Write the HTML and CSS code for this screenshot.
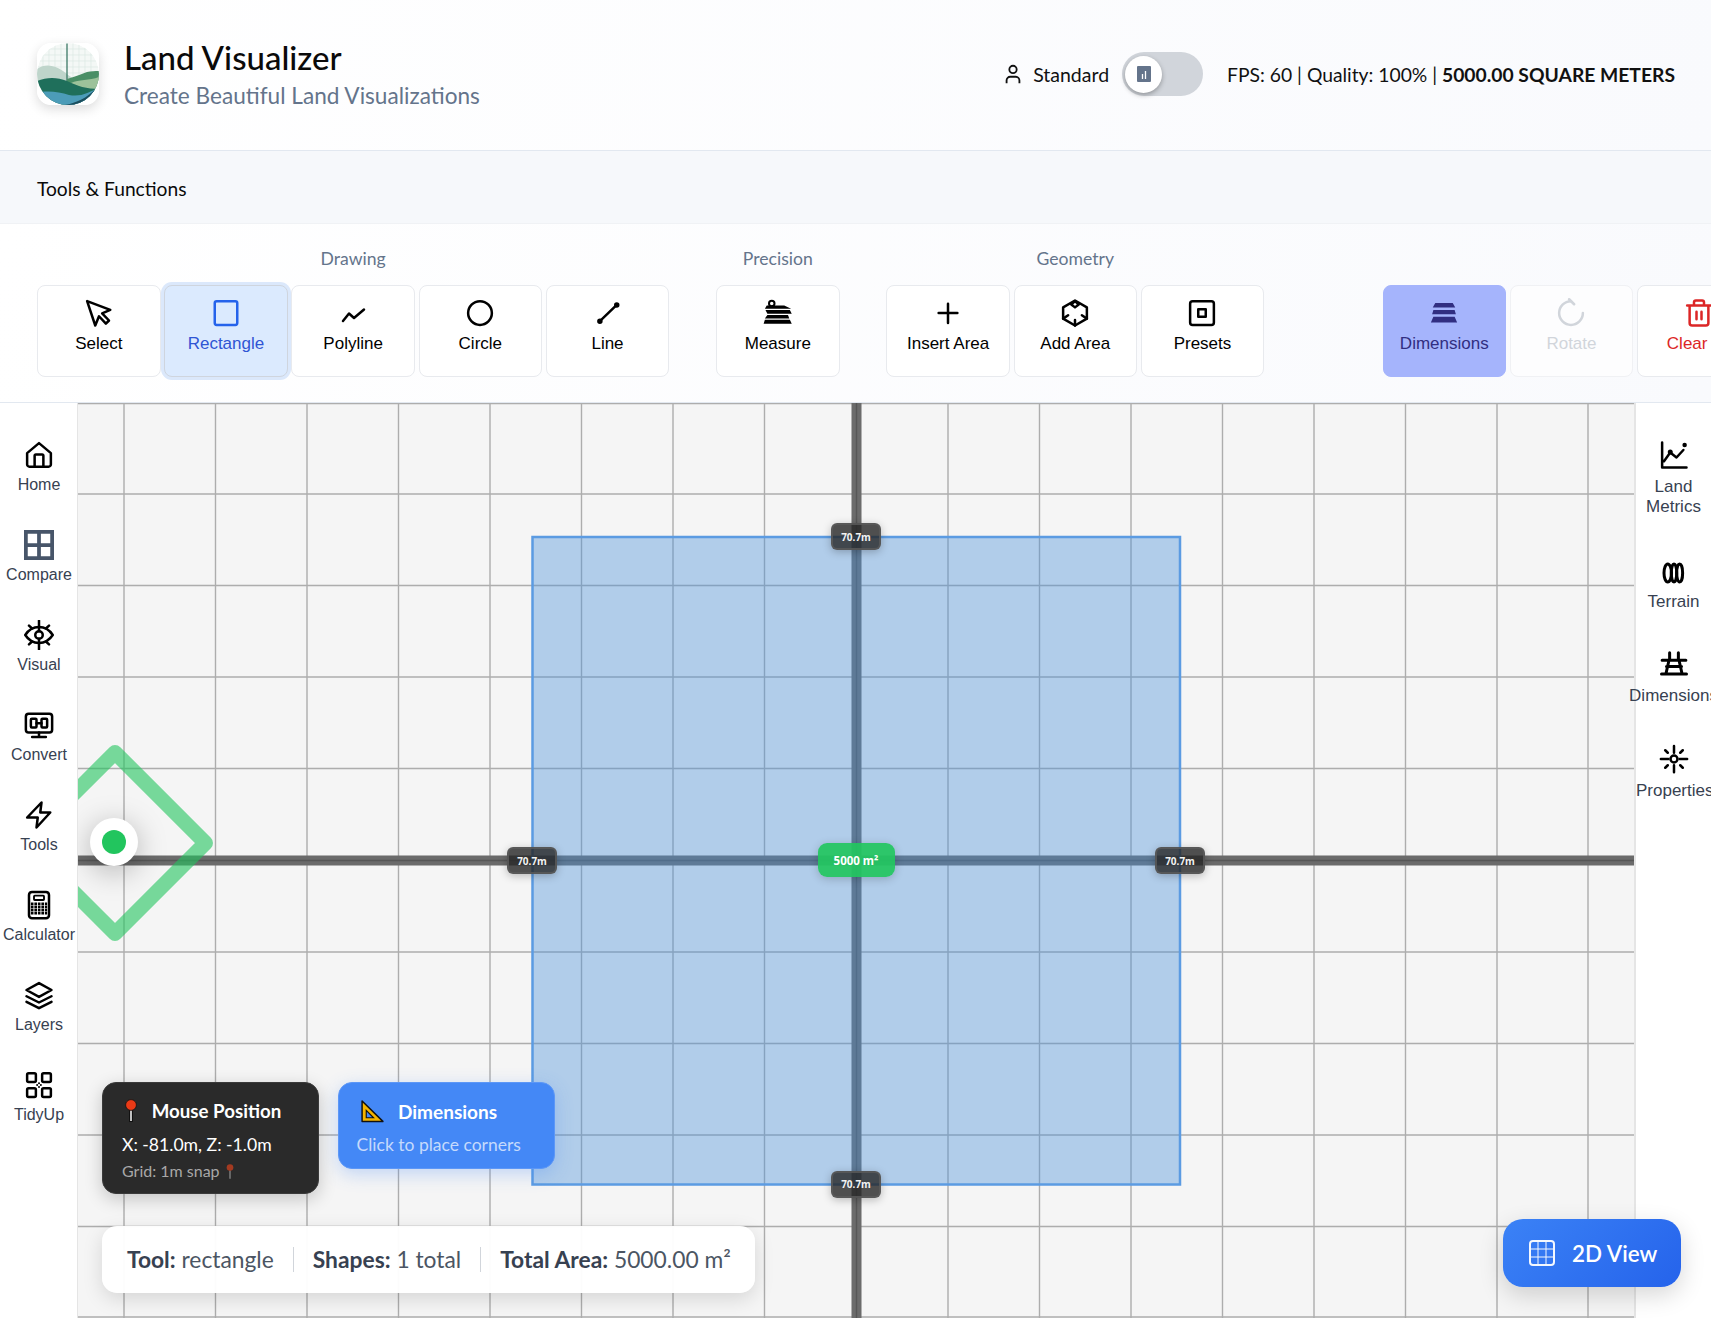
FILE: index.html
```html
<!DOCTYPE html>
<html lang="en">
<head>
<meta charset="utf-8">
<title>Land Visualizer</title>
<link rel="stylesheet" href="styles.css">
</head>
<body>
<header class="header">
  <div class="brand">
    <svg class="logo" viewBox="0 0 62 62">
      <defs><clipPath id="logoClip"><circle cx="31" cy="31" r="31"/></clipPath></defs>
      <rect width="62" height="62" rx="14" fill="#fff"/>
      <g clip-path="url(#logoClip)">
        <circle cx="31" cy="31" r="31" fill="#f4f8f6"/>
        <path d="M0 6H62M0 12H62M0 18H62M0 24H62M0 30H62M6 0V40M12 0V40M18 0V40M24 0V40M36 0V40M42 0V40M48 0V40M54 0V40" stroke="#dbe9e4" stroke-width=".7" fill="none"/>
        <path d="M0 26C8 20 18 22 26 28C34 34 42 42 62 40V62H0Z" fill="#bfd5cb"/>
        <path d="M30 0.5V40" stroke="#2c6e5a" stroke-width="1.2"/>
        <path d="M30 36C38 34 44 31 50 29C54 28 58 28 62 28V50H30Z" fill="#4a8f66"/>
        <path d="M34 40C42 36 52 38 62 34V50H34Z" fill="#9cc29a"/>
        <path d="M0 38C10 34 20 34 30 38C40 43 50 46 62 46V62H0Z" fill="#1f6f5b"/>
        <path d="M0 50C10 47 22 49 32 52C44 54 52 50 62 44V62H0Z" fill="#4c9cb8"/>
        <path d="M28 62C38 60 50 56 60 44L62 62Z" fill="#1c4e5e"/>
      </g>
    </svg>
    <div class="brand-text">
      <h1 class="title">Land Visualizer</h1>
      <p class="subtitle">Create Beautiful Land Visualizations</p>
    </div>
  </div>
  <div class="header-right">
    <svg class="user-icon" viewBox="0 0 24 24"><circle cx="12" cy="7" r="4"/><path d="M5 22v-3a4 4 0 0 1 4-4h6a4 4 0 0 1 4 4v3"/></svg>
    <span class="mode">Standard</span>
    <div class="toggle"><div class="thumb"><svg class="thumb-icon" viewBox="0 0 14 16"><rect width="14" height="16" rx="1" fill="#64748b"/><path d="M5.5 8v5M8.5 5v8" stroke="#fff" stroke-width="1.3"/></svg></div></div>
    <div class="stats">FPS: 60 | Quality: 100% | <strong>5000.00 SQUARE METERS</strong></div>
  </div>
</header>

<div class="section-bar">Tools &amp; Functions</div>

<section class="toolbar">
  <div class="group">
    <div class="group-label">Drawing</div>
    <div class="group-row">
      <button class="tool"><svg class="ico" viewBox="0 0 24 24"><path d="M2.5 2.5L21 9.5L14.5 12.3L20 18L17.5 20.5L12 14.6L9 22Z"/></svg><span>Select</span></button>
      <button class="tool active"><svg class="ico" viewBox="0 0 24 24"><rect x="3" y="2.5" width="18" height="19" rx="1.5"/></svg><span>Rectangle</span></button>
      <button class="tool"><svg class="ico" viewBox="0 0 24 24"><path d="M4 18.4L8.8 12.4L12.8 16L20.8 9.2"/></svg><span>Polyline</span></button>
      <button class="tool"><svg class="ico" viewBox="0 0 24 24"><circle cx="12" cy="12" r="9.5"/></svg><span>Circle</span></button>
      <button class="tool"><svg class="ico" viewBox="0 0 24 24"><path d="M5.5 18.5L19 5.5"/><circle class="solid" cx="5.5" cy="18.5" r="1.2"/><circle class="solid" cx="19" cy="5.5" r="1.2"/></svg><span>Line</span></button>
    </div>
  </div>
  <div class="group">
    <div class="group-label">Precision</div>
    <div class="group-row">
      <button class="tool"><svg class="ico" viewBox="0 0 24 24"><circle cx="7" cy="4.3" r="2.2" stroke-width="1.6"/><path class="solid nostroke" d="M3 6H17L22.5 8.6H1.5ZM2 9.6H21.5L23 12.6H3.5ZM3.5 13.6H20L21 16.4H1.5ZM1.5 17.4H21.5L23 20.6H.5Z"/></svg><span>Measure</span></button>
    </div>
  </div>
  <div class="group">
    <div class="group-label">Geometry</div>
    <div class="group-row">
      <button class="tool"><svg class="ico" viewBox="0 0 24 24"><path d="M12 4.5V20M4.5 12H19.5"/></svg><span>Insert Area</span></button>
      <button class="tool"><svg class="ico" viewBox="0 0 24 24"><path d="M12 2L21.5 7.5V16.5L12 22L2.5 16.5V7.5Z"/><path d="M12 2.5L9 5.2L12 7.5L15 5.2ZM12 22V17.5M2.5 16.5L6.5 13.8M21.5 16.5L17.5 13.8" stroke-width="2"/></svg><span>Add Area</span></button>
      <button class="tool"><svg class="ico" viewBox="0 0 24 24"><rect x="2.5" y="2.5" width="19" height="19" rx="2"/><rect x="9" y="9" width="6" height="6"/></svg><span>Presets</span></button>
    </div>
  </div>
  <div class="group group-end">
    <div class="group-row">
      <button class="tool dims"><svg class="ico" viewBox="0 0 24 24"><path class="solid nostroke" d="M5 4H19L21 7.5H3ZM3.5 9.5H20.5L21.5 13H2.5ZM3.5 15H20.5L22.5 19.5H1.5Z"/></svg><span>Dimensions</span></button>
      <button class="tool disabled"><svg class="ico" viewBox="0 0 24 24"><path d="M12 2.5A9.5 9.5 0 1 0 21.5 12"/><path d="M10.5 1L14.5 5"/></svg><span>Rotate</span></button>
      <button class="tool danger"><svg class="ico" viewBox="0 0 24 24"><path d="M2.5 6H21.5M8 6V3.5A1.5 1.5 0 0 1 9.5 2H14.5A1.5 1.5 0 0 1 16 3.5V6M4.5 6V20A2 2 0 0 0 6.5 22H17.5A2 2 0 0 0 19.5 20V6M10 11V17M14 11V17"/></svg><span class="clear-label">Clear</span></button>
    </div>
  </div>
</section>

<main class="workspace">
  <nav class="side side-left">
    <a class="side-item"><svg class="ico" viewBox="0 0 24 24"><path d="M2.5 10.5L12 2.5L21.5 10.5V19.5A1.8 1.8 0 0 1 19.7 21.3H4.3A1.8 1.8 0 0 1 2.5 19.5ZM8.5 21V12.5A1 1 0 0 1 9.5 11.5H14.5A1 1 0 0 1 15.5 12.5V21"/></svg><span>Home</span></a>
    <a class="side-item"><svg class="ico slate" viewBox="0 0 24 24"><path class="sq" d="M1.5 1.5H22.5V22.5H1.5ZM12 1.5V22.5M1.5 12H22.5"/></svg><span>Compare</span></a>
    <a class="side-item"><svg class="ico" viewBox="0 0 24 24"><path d="M1 12C6.5 3.5 17.5 3.5 23 12C17.5 20.5 6.5 20.5 1 12Z"/><circle cx="12" cy="12" r="3"/><path d="M12 .5V9M12 15V23.5M4 4.5L6.5 6.8M20 4.5L17.5 6.8M4 19.5L6.5 17.2M20 19.5L17.5 17.2"/></svg><span>Visual</span></a>
    <a class="side-item"><svg class="ico" viewBox="0 0 24 24"><rect x="1.5" y="3" width="21" height="15" rx="2.2"/><rect x="5.5" y="7" width="4.5" height="7" rx=".8"/><rect x="14" y="7" width="4.5" height="7" rx=".8"/><path d="M10 10.5H14M12 18V21.5M6.5 21.5H17.5"/></svg><span>Convert</span></a>
    <a class="side-item"><svg class="ico" viewBox="0 0 24 24"><path d="M14 2L13 10H21L10 22L11 14H2.5Z"/></svg><span>Tools</span></a>
    <a class="side-item"><svg class="ico" viewBox="0 0 24 24"><rect x="4" y="1.5" width="16" height="21" rx="2.4"/><rect x="8" y="4.5" width="8" height="3.5" rx=".6" stroke-width="1.5"/><path class="dots" d="M5.5 11H18.5M5.5 13.5H18.5M5.5 16H18.5M5.5 18.5H18.5"/></svg><span>Calculator</span></a>
    <a class="side-item"><svg class="ico" viewBox="0 0 24 24"><path d="M12 2.5L22 8L12 13.5L2 8ZM2 13L12 18L22 13M2 17.5L12 22.5L22 17.5"/></svg><span>Layers</span></a>
    <a class="side-item"><svg class="ico" viewBox="0 0 24 24"><rect x="2.5" y="2.5" width="7" height="7" rx="1.2"/><rect x="14.5" y="2.5" width="7" height="7" rx="1.2"/><rect x="2.5" y="14.5" width="7" height="7" rx="1.2"/><rect x="14.5" y="14.5" width="7" height="7" rx="1.2"/><g class="solid nostroke"><circle cx="12" cy="10.5" r=".8"/><circle cx="10.5" cy="12" r=".8"/><circle cx="13.5" cy="12" r=".8"/><circle cx="12" cy="13.5" r=".8"/></g></svg><span>TidyUp</span></a>
  </nav>

  <div class="canvas">
    <svg class="scene" viewBox="78 403 1556 915">
      <path class="grid" d="M124 403V1318M215.5 403V1318M307 403V1318M398.5 403V1318M490 403V1318M581.5 403V1318M673 403V1318M764.5 403V1318M948 403V1318M1039.5 403V1318M1131 403V1318M1222.5 403V1318M1314 403V1318M1405.5 403V1318M1497 403V1318M1588 403V1318M78 403.5H1635M78 494H1635M78 585.5H1635M78 677H1635M78 768.5H1635M78 952H1635M78 1043.5H1635M78 1135H1635M78 1226.5H1635M78 1317H1635"/>
      <path class="axis" d="M856.5 403V1318M78 860.5H1635"/>
      <path class="axis-core" d="M856.5 403V1318M78 860.5H1635"/>
      <rect class="plot" x="532.5" y="537" width="647.5" height="647.5"/>
      <path class="zone" d="M115 752.5L205.5 843L115 933.5L24.5 843Z"/>
    </svg>
    <div class="marker"><i></i></div>
    <div class="tag tag-top">70.7m</div>
    <div class="tag tag-left">70.7m</div>
    <div class="tag tag-right">70.7m</div>
    <div class="tag tag-bottom">70.7m</div>
    <div class="area-tag">5000 m²</div>

    <div class="card card-dark">
      <div class="card-head"><svg class="pin" viewBox="0 0 12 24"><path d="M6 10V23" stroke="#111" stroke-width="4"/><path d="M6 10V22" stroke="#eee" stroke-width="1.6"/><circle cx="6" cy="6" r="5.4" fill="#ea3a16" stroke="#111" stroke-width=".8"/></svg><span>Mouse Position</span></div>
      <div class="card-line">X: -81.0m, Z: -1.0m</div>
      <div class="card-note">Grid: 1m snap <svg class="pin-small" viewBox="0 0 12 24"><path d="M6 10V23" stroke="#777" stroke-width="2.4"/><circle cx="6" cy="6" r="5" fill="#a33a20"/></svg></div>
    </div>
    <div class="card card-blue">
      <div class="card-head"><svg class="square-ico" viewBox="0 0 24 24"><path d="M2 2L22 21.5H2Z" fill="#f5b400" stroke="#111" stroke-width="1.4" stroke-linejoin="round"/><path d="M6 11L13 18H6Z" fill="#4488f6" stroke="#111" stroke-width="1.1"/></svg><span>Dimensions</span></div>
      <div class="card-line muted">Click to place corners</div>
    </div>

    <div class="status">
      <div class="status-item"><b>Tool:</b> rectangle</div>
      <div class="status-item"><b>Shapes:</b> 1 total</div>
      <div class="status-item"><b>Total Area:</b> 5000.00 m²</div>
    </div>

    <button class="view-btn"><svg class="view-ico" viewBox="0 0 26 26"><rect x="1" y="1" width="24" height="24" rx="3" stroke-width="2"/><path d="M9 1V25M17 1V25M1 9H25M1 17H25" stroke-width="1"/></svg><span>2D View</span></button>
  </div>

  <nav class="side side-right">
    <a class="side-item"><svg class="ico" viewBox="0 0 24 24"><path d="M2.5 2V22H22M4 17L9 10L14 14L19.5 8"/><circle class="solid nostroke" cx="9" cy="9.5" r="2"/><circle class="solid nostroke" cx="20.5" cy="4" r="1.8"/></svg><span>Land Metrics</span></a>
    <a class="side-item"><svg class="ico" viewBox="0 0 24 24"><g transform="translate(0 2.4)"><ellipse cx="7" cy="12" rx="3" ry="7.2" stroke-width="2.4"/><ellipse cx="12" cy="12" rx="2.2" ry="7.2" stroke-width="2.4"/><ellipse cx="16.5" cy="12" rx="2.4" ry="7.2" stroke-width="2.4"/></g></svg><span>Terrain</span></a>
    <a class="side-item"><svg class="ico" viewBox="0 0 24 24"><path d="M2.5 9H21.5M8.5 3V9M15.5 3V9M6 14H18M8 9L5.5 20M16 9L18.5 20M2 20H22" stroke-width="2.4"/></svg><span>Dimensions</span></a>
    <a class="side-item"><svg class="ico" viewBox="0 0 24 24"><circle cx="12" cy="12" r="2.8"/><path d="M12 1.5V7M12 17V22.5M1.5 12H7.5M16.5 12H22.5M5 5L7 7M19 5L17 7M5 19L7 17M19 19L17 17"/></svg><span>Properties</span></a>
  </nav>
</main>
</body>
</html>
```

FILE: styles.css
```css
* { box-sizing: border-box; }
html, body { margin: 0; height: 100%; }
body {
  width: 1711px;
  height: 1318px;
  overflow: hidden;
  display: flex;
  flex-direction: column;
  background: #fff;
  color: #111;
  font-family: "Lato", "Noto Sans", sans-serif;
}

/* header */
.header {
  height: 151px;
  flex: none;
  display: flex;
  align-items: center;
  justify-content: space-between;
  padding: 0 36px 2px 37px;
  background: linear-gradient(100deg, #fff 0%, #f9fafd 100%);
  border-bottom: 1px solid #e2e8f0;
}
.brand { display: flex; align-items: center; gap: 25px; }
.logo { width: 62px; height: 62px; flex: none; border-radius: 14px; box-shadow: 0 4px 12px rgba(0,0,0,.14); }
.brand-text { display: flex; flex-direction: column; gap: 5px; }
.title { margin: 0; font-size: 33px; line-height: 38px; font-weight: 500; color: #0a0a0a; }
.subtitle { margin: 0; font-size: 22.6px; line-height: 30px; color: #64748b; }
.header-right { display: flex; align-items: center; }
.user-icon { width: 22px; height: 22px; fill: none; stroke: #111; stroke-width: 2; margin-right: 9px; }
.mode { font-size: 19.5px; margin-right: 13px; }
.toggle {
  width: 81px; height: 44px; border-radius: 22px; background: #d1d5db;
  display: flex; align-items: center; padding-left: 3px; margin-right: 24px;
}
.thumb {
  width: 37px; height: 37px; border-radius: 50%; background: #fff;
  display: flex; align-items: center; justify-content: center;
  box-shadow: 0 2px 5px rgba(0,0,0,.3);
}
.thumb-icon { width: 14px; height: 16px; }
.stats { font-size: 19.3px; }
.stats strong { font-weight: 700; }

/* section bar */
.section-bar {
  height: 73px; flex: none; display: flex; align-items: center;
  padding: 2px 0 0 37px; font-size: 19.2px; color: #0a0a0a;
  background: #f6f8fb; border-bottom: 1px solid #f0f2f5;
}

/* toolbar */
.toolbar {
  height: 179px; flex: none; display: flex; gap: 46.8px;
  padding: 23px 0 0 37px;
  background: linear-gradient(100deg, #fff 0%, #f9fafd 100%);
  border-bottom: 1px solid #e2e8f0;
}
.group { flex: none; display: flex; flex-direction: column; gap: 14px; }
.group-end { margin-left: 71.5px; justify-content: flex-end; padding-bottom: 25px; }
.group-label { height: 24px; line-height: 24px; text-align: center; font-size: 17.6px; color: #64748b; }
.group-row { display: flex; gap: 3.7px; }
.tool {
  width: 123.5px; height: 92px; padding: 12px 0 0; flex: none;
  display: flex; flex-direction: column; align-items: center; gap: 6px;
  background: #fff; border: 1px solid #e8eaee; border-radius: 8px; color: #000;
  font-family: "Liberation Sans", Arial, sans-serif; font-size: 17px; line-height: 20px;
}
.ico { width: 30px; height: 30px; flex: none; fill: none; stroke: currentColor; stroke-width: 2; stroke-linecap: round; stroke-linejoin: round; }
.solid { fill: currentColor; }
.nostroke { stroke: none; }
.tool.active { background: #dbeafe; color: #2f55d4; border-color: #cfd5de; box-shadow: 0 0 0 3px #dbe8fb; }
.tool.active .ico { color: #2563eb; }
.tool.dims { background: #a5b4fc; color: #312e81; border-color: #a5b4fc; }
.tool.disabled { color: #d1d5db; border-color: #f0f1f4; background: #fdfdfe; }
.tool.danger { color: #dc2626; }
.clear-label { margin-right: 23px; }

/* workspace */
.workspace { flex: 1; min-height: 0; display: flex; }
.side {
  flex: none; display: flex; flex-direction: column; background: #fff;
  font-family: "Liberation Sans", Arial, sans-serif; position: relative; z-index: 2;
}
.side-left { width: 78px; padding-left: 1px; border-right: 1px solid #e5e5e5; color: #000; }
.side-right { width: 77px; color: #000; padding-top: 37px; border-left: 2px solid #e5e5e5; gap: 37.5px; }
.side-item { display: flex; flex-direction: column; align-items: center; gap: 7px; }
.side-item span { display: block; text-align: center; color: #374151; }
.side-left .side-item { height: 90px; padding-top: 37px; flex: none; gap: 6px; margin-bottom: -17px; margin-top: 17px; }
.side-left .side-item:first-child { margin-top: 0; }
.side-left .side-item span { font-size: 16px; line-height: 18px; white-space: nowrap; }
.side-right .side-item span { font-size: 17px; line-height: 20px; }
.side-right .side-item { width: 75px; }
.side-right .side-item span { max-width: 75px; }
.side-right .side-item:nth-child(3) span { margin: 0 -12px; max-width: none; }
.slate { color: #475569; }
.sq { stroke-width: 3; stroke-linejoin: miter; stroke-linecap: butt; }
.dots { stroke-width: 2.1; stroke-linecap: butt; stroke-dasharray: 2.1 .7; }

/* canvas */
.canvas { flex: 1; position: relative; background: #f5f5f5; }
.scene { position: absolute; inset: 0; width: 100%; height: 100%; display: block; overflow: hidden; }
.grid { fill: none; stroke: #adadad; stroke-width: 1.4; }
.axis { fill: none; stroke: #6b6b6b; stroke-width: 10; }
.axis-core { fill: none; stroke: #565656; stroke-width: 1.4; }
.plot { fill: rgba(74,144,217,.4); stroke: #5b9be2; stroke-width: 2.5; }
.zone { fill: none; stroke: rgba(34,197,94,.6); stroke-width: 15; stroke-linejoin: round; }

.marker {
  position: absolute; left: 12px; top: 415px; width: 48px; height: 48px; border-radius: 50%;
  background: #fff; display: flex; align-items: center; justify-content: center;
  box-shadow: 0 6px 30px rgba(0,0,0,.28);
}
.marker i { display: block; width: 24px; height: 24px; border-radius: 50%; background: #22c55e; }

.tag {
  position: absolute; width: 50px; height: 27px; margin: -13.5px 0 0 -25px;
  display: flex; align-items: center; justify-content: center;
  background: rgba(38,38,38,.8); border: 2px solid rgba(90,90,90,.85); border-radius: 6px;
  color: #f2f2f2; font: 700 10px "Noto Sans", sans-serif;
  box-shadow: 0 2px 8px rgba(0,0,0,.25);
}
.tag-top { left: 778px; top: 133.5px; }
.tag-left { left: 454px; top: 457.5px; }
.tag-right { left: 1102px; top: 457.5px; }
.tag-bottom { left: 778px; top: 781px; }
.area-tag {
  position: absolute; left: 739.5px; top: 440px; width: 77px; height: 34px;
  display: flex; align-items: center; justify-content: center;
  background: rgba(34,197,94,.92); border-radius: 9px;
  color: #fff; font: 700 11.5px "Noto Sans", sans-serif;
  box-shadow: 0 2px 10px rgba(0,0,0,.2);
}

.card { position: absolute; top: 679px; width: 217px; border-radius: 14px; padding: 15px 19px 0; color: #fff; }
.card-dark { left: 24px; height: 112px; background: #2a2a2a; border: 1px solid #3a3a3a; box-shadow: 0 5px 18px rgba(0,0,0,.2); }
.card-blue { left: 259.5px; height: 87px; padding-left: 18px; background: #4488f6; border: 1px solid #5c97f7; box-shadow: 0 5px 18px rgba(68,136,246,.3); }
.card-head { height: 26px; display: flex; align-items: center; font-size: 18.7px; font-weight: 700; margin-bottom: 9px; }
.card-blue .card-head { font-size: 19px; }
.pin { width: 12px; height: 24px; margin: 0 14.7px 0 3px; flex: none; }
.square-ico { width: 25px; height: 25px; margin: 0 13.5px 0 3px; flex: none; }
.card-line { font-size: 17.6px; line-height: 24px; }
.card-line.muted { color: #c5dafc; font-size: 17.5px; }
.card-note { display: flex; align-items: center; gap: 6px; font-size: 16px; line-height: 22px; color: #a8a8a8; margin-top: 3px; }
.pin-small { width: 8px; height: 17px; }

.status {
  position: absolute; left: 24px; top: 823px; height: 67px; width: 653px;
  display: flex; align-items: center; padding: 0 25px;
  background: rgba(255,255,255,.96); border-radius: 15px;
  box-shadow: 0 6px 20px rgba(0,0,0,.13);
  font-size: 22.8px; color: #4b5563;
}
.status b { color: #374151; font-weight: 700; }
.status-item { padding-right: 19px; margin-right: 19px; border-right: 1.5px solid #d1d5db; line-height: 25px; white-space: nowrap; }
.status-item:last-child { border: 0; margin: 0; padding: 0; }

.view-btn {
  position: absolute; z-index: 3; left: 1425px; top: 816px; width: 178px; height: 68px;
  display: flex; align-items: center; gap: 17px; padding: 0 0 0 26px;
  border: 0; border-radius: 20px; color: #fff;
  background: linear-gradient(135deg, #3b82f6, #2563eb);
  box-shadow: 0 8px 24px rgba(0,0,0,.16);
  font: 600 22.4px "Lato", sans-serif;
}
.view-ico { width: 26px; height: 26px; fill: none; stroke: #fff; opacity: .95; }
```
